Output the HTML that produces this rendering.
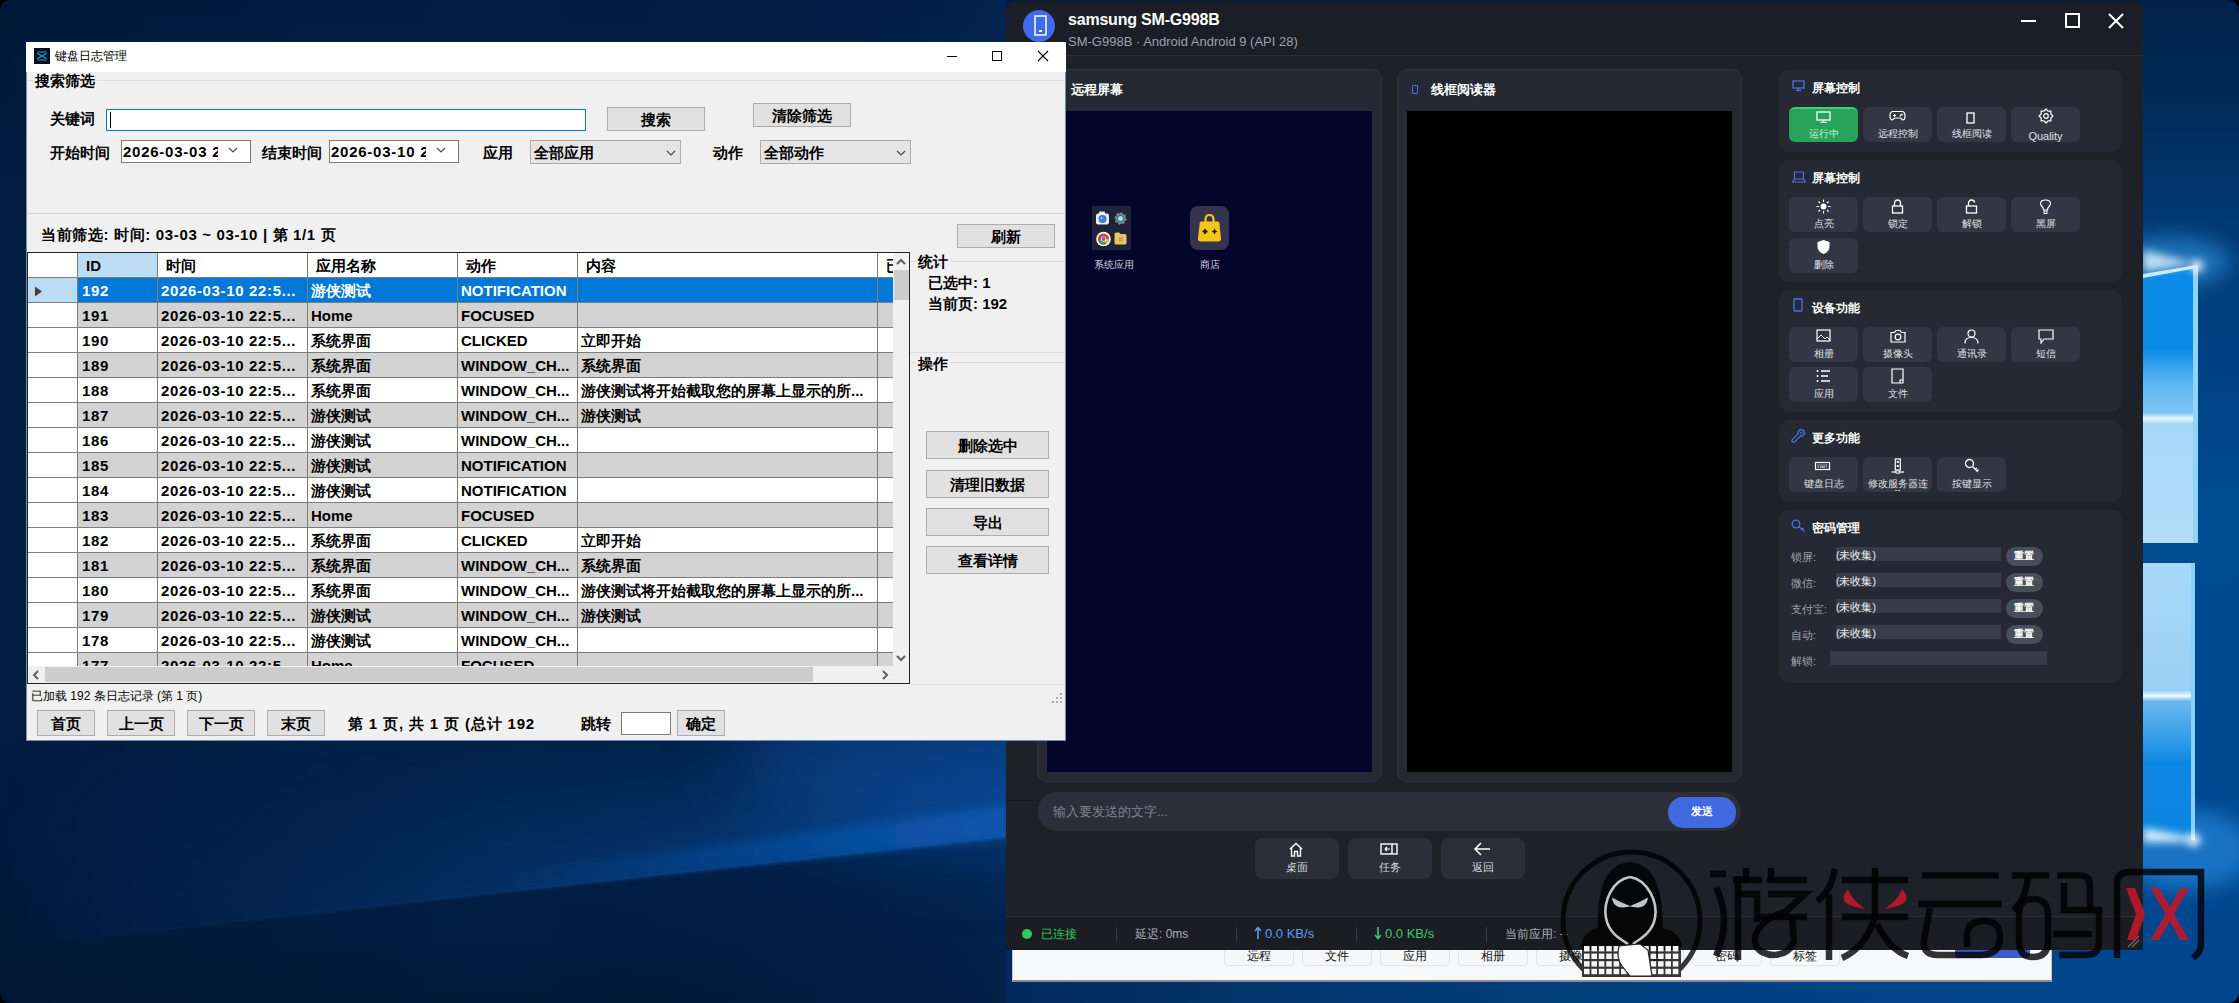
<!DOCTYPE html>
<html><head><meta charset="utf-8">
<style>
*{box-sizing:border-box;margin:0;padding:0}
html,body{width:2239px;height:1003px;overflow:hidden}
body{position:relative;font-family:"Liberation Sans",sans-serif;background:#012552}
.a{position:absolute}
.t{white-space:nowrap;line-height:1}
.wb{font-weight:bold;font-size:15px;color:#000}
.btn{background:#e1e1e1;border:1px solid #adadad;font-weight:bold;font-size:15px;color:#000;display:flex;align-items:center;justify-content:center;line-height:1}
.db{background:#30333f;border-radius:6px;color:#e8e8ec;font-size:10px;text-align:center;line-height:1}
.card{background:#262933;border-radius:10px}
</style></head><body>

<svg class="a" style="left:0;top:0" width="2239" height="1003">
<defs>
<linearGradient id="g_base" gradientUnits="userSpaceOnUse" x1="0" y1="0" x2="0" y2="1003"><stop offset="0" stop-color="#011d42"/><stop offset="0.4" stop-color="#02254e"/><stop offset="0.85" stop-color="#011f46"/><stop offset="1" stop-color="#011b3c"/></linearGradient><linearGradient id="g_hx" gradientUnits="userSpaceOnUse" x1="0" y1="0" x2="1006" y2="0"><stop offset="0" stop-color="#000" stop-opacity="0.12"/><stop offset="0.5" stop-color="#000" stop-opacity="0"/><stop offset="1" stop-color="#0a4080" stop-opacity="0.18"/></linearGradient>
<linearGradient id="g_beam" gradientUnits="userSpaceOnUse" x1="0" y1="0" x2="1006" y2="0"><stop offset="0" stop-color="#0a3c7c" stop-opacity="0"/><stop offset="0.35" stop-color="#0a3c7c" stop-opacity="0.35"/><stop offset="0.75" stop-color="#0a4a98" stop-opacity="0.75"/><stop offset="1" stop-color="#0b56ae" stop-opacity="1"/></linearGradient>
<linearGradient id="g_up" gradientUnits="userSpaceOnUse" x1="0" y1="900" x2="0" y2="720"><stop offset="0" stop-color="#fff" stop-opacity="1"/><stop offset="1" stop-color="#fff" stop-opacity="0"/></linearGradient>
<mask id="m_up"><rect x="0" y="0" width="2239" height="1003" fill="url(#g_up)"/></mask>
<filter id="f_b30" x="-50%" y="-50%" width="200%" height="200%"><feGaussianBlur stdDeviation="40"/></filter>
<filter id="f_b2" x="-10%" y="-10%" width="120%" height="120%"><feGaussianBlur stdDeviation="1.5"/></filter><filter id="f_b6" x="-100%" y="-100%" width="300%" height="300%"><feGaussianBlur stdDeviation="4"/></filter>
<filter id="f_b12" x="-100%" y="-100%" width="300%" height="300%"><feGaussianBlur stdDeviation="10"/></filter>
<linearGradient id="g_right" x1="0" y1="0" x2="0" y2="1"><stop offset="0" stop-color="#01224a"/><stop offset="0.1" stop-color="#012a58"/><stop offset="0.22" stop-color="#013a74"/><stop offset="0.5" stop-color="#004b92"/><stop offset="1" stop-color="#00468e"/></linearGradient>
<linearGradient id="g_up1" x1="0" y1="0" x2="0" y2="1"><stop offset="0" stop-color="#0a8ae8"/><stop offset="0.3" stop-color="#0a8ce8"/><stop offset="0.42" stop-color="#5cb6f0"/><stop offset="0.53" stop-color="#7cc6f4"/><stop offset="0.55" stop-color="#e8f6ff"/><stop offset="0.57" stop-color="#a6d8f8"/><stop offset="1" stop-color="#b2ddf8"/></linearGradient>
<linearGradient id="g_lo1" x1="0" y1="0" x2="0" y2="1"><stop offset="0" stop-color="#a8d8f8"/><stop offset="0.46" stop-color="#9ad0f4"/><stop offset="0.48" stop-color="#f0faff"/><stop offset="0.5" stop-color="#6ab8ee"/><stop offset="0.66" stop-color="#2a98e8"/><stop offset="0.72" stop-color="#0c88e2"/><stop offset="1" stop-color="#0a84e0"/></linearGradient>
</defs>
<rect width="2239" height="1003" fill="url(#g_base)"/><rect width="1006" height="1003" fill="url(#g_hx)"/><path d="M0 0 H12 Q0 0 0 12 Z" fill="#000"/><path d="M0 1003 H12 Q0 1003 0 991 Z" fill="#000"/>
<ellipse cx="1000" cy="760" rx="260" ry="90" fill="#0a4c9c" opacity="0.55" filter="url(#f_b30)"/>
<polygon points="0,948 1006,837 1006,500 0,600" fill="url(#g_beam)" mask="url(#m_up)"/><polygon points="0,950 1006,839 1006,835 0,946" fill="url(#g_beam)" opacity="0.35"/>
<linearGradient id="g_streak" gradientUnits="userSpaceOnUse" x1="500" y1="0" x2="1006" y2="0"><stop offset="0" stop-color="#0c5cb8" stop-opacity="0"/><stop offset="1" stop-color="#0c5cb8" stop-opacity="0.7"/></linearGradient>
<polygon points="500,892 1006,837 1006,805 500,875" fill="url(#g_streak)" filter="url(#f_b6)"/>
<linearGradient id="g_bot" x1="0" y1="0" x2="1" y2="0"><stop offset="0" stop-color="#022a5c"/><stop offset="0.5" stop-color="#02407e"/><stop offset="1" stop-color="#00468e"/></linearGradient><rect x="1006" y="950" width="1137" height="53" fill="url(#g_bot)"/>
<rect x="2143" y="0" width="96" height="1003" fill="url(#g_right)"/>
<ellipse cx="2170" cy="262" rx="60" ry="25" fill="#3aa0f0" opacity="0.55" filter="url(#f_b12)"/>
<ellipse cx="2185" cy="850" rx="70" ry="40" fill="#2a90e8" opacity="0.6" filter="url(#f_b12)"/>
<polygon points="2143,276 2197,266 2197,543 2143,543" fill="url(#g_up1)"/>
<polygon points="2143,250 2197,264 2143,272" fill="#d8f0ff" opacity="0.85" filter="url(#f_b6)"/>
<polygon points="2143,274 2197,265 2197,268 2143,278" fill="#c8ecff"/>
<rect x="2193" y="266" width="5" height="277" fill="#90d4fa"/>
<polygon points="2143,563 2195,563 2195,840 2143,832" fill="url(#g_lo1)"/>
<rect x="2191" y="563" width="4" height="277" fill="#8ad0fa"/>
<polygon points="2143,828 2195,838 2195,842 2143,842" fill="#e0f4ff" filter="url(#f_b6)"/>
<circle cx="2197" cy="266" r="6" fill="#fff" filter="url(#f_b6)"/>
<circle cx="2194" cy="840" r="6" fill="#fff" filter="url(#f_b6)"/><path d="M2239 0 H2227 Q2239 0 2239 12 Z" fill="#000"/><path d="M2239 1003 H2227 Q2239 1003 2239 991 Z" fill="#000"/>
</svg>
<div class="a" style="left:1012px;top:900px;width:1040px;height:82px;background:#f7f8fa;border:1px solid #c8c8c8;border-top:0;border-bottom:2px solid #8a8c90"></div>
<div class="a" style="left:1224px;top:930px;width:70px;height:36px;background:#f6f7f9;border:1px solid #e2e4e8;border-radius:4px"></div>
<div class="a t" style="left:1224px;top:950px;width:70px;text-align:center;font-size:12px;color:#111">远程</div>
<div class="a" style="left:1302px;top:930px;width:70px;height:36px;background:#f6f7f9;border:1px solid #e2e4e8;border-radius:4px"></div>
<div class="a t" style="left:1302px;top:950px;width:70px;text-align:center;font-size:12px;color:#111">文件</div>
<div class="a" style="left:1380px;top:930px;width:70px;height:36px;background:#f6f7f9;border:1px solid #e2e4e8;border-radius:4px"></div>
<div class="a t" style="left:1380px;top:950px;width:70px;text-align:center;font-size:12px;color:#111">应用</div>
<div class="a" style="left:1458px;top:930px;width:70px;height:36px;background:#f6f7f9;border:1px solid #e2e4e8;border-radius:4px"></div>
<div class="a t" style="left:1458px;top:950px;width:70px;text-align:center;font-size:12px;color:#111">相册</div>
<div class="a" style="left:1536px;top:930px;width:70px;height:36px;background:#f6f7f9;border:1px solid #e2e4e8;border-radius:4px"></div>
<div class="a t" style="left:1536px;top:950px;width:70px;text-align:center;font-size:12px;color:#111">摄像</div>
<div class="a" style="left:1614px;top:930px;width:70px;height:36px;background:#f6f7f9;border:1px solid #e2e4e8;border-radius:4px"></div>
<div class="a t" style="left:1614px;top:950px;width:70px;text-align:center;font-size:12px;color:#111">通话</div>
<div class="a" style="left:1692px;top:930px;width:70px;height:36px;background:#f6f7f9;border:1px solid #e2e4e8;border-radius:4px"></div>
<div class="a t" style="left:1692px;top:950px;width:70px;text-align:center;font-size:12px;color:#111">密码</div>
<div class="a" style="left:1770px;top:930px;width:70px;height:36px;background:#f6f7f9;border:1px solid #e2e4e8;border-radius:4px"></div>
<div class="a t" style="left:1770px;top:950px;width:70px;text-align:center;font-size:12px;color:#111">标签</div>
<div class="a" style="left:1955px;top:940px;width:75px;height:18px;background:#3a5ccc;border-radius:4px"></div>
<div class="a" style="left:1006px;top:1px;width:1137px;height:949px;background:#1f2129;border-radius:11px 11px 8px 8px"></div>
<div class="a" style="left:1006px;top:1px;width:1137px;height:54px;background:#1b1e26;border-radius:11px 11px 0 0"></div>
<div class="a" style="left:1006px;top:55px;width:1137px;height:1px;background:#2c2e37"></div>
<div class="a" style="left:1023px;top:10px;width:32px;height:32px;background:#3f6be8;border-radius:50%"></div>
<svg class="a" style="left:1034px;top:15px" width="13" height="21"><rect x="1" y="1" width="11" height="19" fill="none" stroke="#fff" stroke-width="1.5"/><rect x="5" y="15" width="3" height="2" fill="#fff"/></svg>
<div class="a t" style="left:1068px;top:12px;font-size:16px;font-weight:bold;color:#fff;letter-spacing:-0.2px">samsung SM-G998B</div>
<div class="a t" style="left:1068px;top:35px;font-size:13px;color:#9ca1b0">SM-G998B · Android Android 9 (API 28)</div>
<div class="a" style="left:2021px;top:20px;width:15px;height:2px;background:#fff"></div>
<div class="a" style="left:2065px;top:13px;width:15px;height:15px;border:2px solid #fff"></div>
<svg class="a" style="left:2108px;top:13px" width="16" height="16"><path d="M1 1 L15 15 M15 1 L1 15" stroke="#fff" stroke-width="2"/></svg>
<div class="a" style="left:1037px;top:69px;width:345px;height:713px;background:#262933;border:1px solid #30333d;border-radius:10px"></div>
<div class="a t" style="left:1071px;top:83px;font-size:13px;font-weight:bold;color:#fff">远程屏幕</div>
<div class="a" style="left:1047px;top:111px;width:325px;height:661px;background:#03052a"></div>
<div class="a" style="left:1092px;top:206px;width:39px;height:44px;background:#1f2238"></div>
<svg class="a" style="left:1095px;top:210px" width="15" height="16"><rect x="1" y="3.5" width="13" height="11" rx="2" fill="#eceef4"/><rect x="4" y="1.5" width="6" height="3" rx="1" fill="#eceef4"/><circle cx="7.5" cy="9" r="4" fill="#5a6a88"/><circle cx="7.5" cy="9" r="3.2" fill="#2a86f0"/><circle cx="6.5" cy="8" r="0.9" fill="#bde0ff"/></svg>
<svg class="a" style="left:1114px;top:211px" width="13" height="15"><polygon points="12.88,8.77 10.66,10.28 10.11,12.90 7.48,12.40 5.23,13.88 3.72,11.66 1.10,11.11 1.60,8.48 0.12,6.23 2.34,4.72 2.89,2.10 5.52,2.60 7.77,1.12 9.28,3.34 11.90,3.89 11.40,6.52" fill="#70889a"/><circle cx="6.5" cy="7.5" r="3.3" fill="#3e5462"/><circle cx="6.5" cy="7.5" r="2.5" fill="#90f0e4"/></svg>
<svg class="a" style="left:1096px;top:231px" width="15" height="16"><circle cx="7.5" cy="8" r="7.3" fill="#fff"/><circle cx="7.5" cy="8" r="5.6" fill="#e2412f"/><path d="M7.5 8 L2.6 10.8 A5.6 5.6 0 0 0 10.3 12.9 Z" fill="#2ea44f"/><path d="M7.5 8 L10.3 12.9 A5.6 5.6 0 0 0 13.1 8 Z" fill="#f6c026"/><circle cx="7.5" cy="8" r="2.6" fill="#fff"/><circle cx="7.5" cy="8" r="2" fill="#2b7de9"/></svg>
<svg class="a" style="left:1113px;top:231px" width="15" height="15"><path d="M1.5 3 Q1.5 1.5 3 1.5 H6 L7.5 3 H12 Q13.5 3 13.5 4.5 V12 Q13.5 13.5 12 13.5 H3 Q1.5 13.5 1.5 12 Z" fill="#e9c466"/><rect x="6" y="6.5" width="1.6" height="1.6" fill="#b89030"/><rect x="8" y="6.5" width="1.6" height="1.6" fill="#b89030"/><rect x="6" y="8.5" width="1.6" height="1.6" fill="#b89030"/><rect x="8" y="8.5" width="1.6" height="1.6" fill="#b89030"/></svg>
<div class="a t" style="left:1094px;top:260px;font-size:10px;color:#d8d8e0">系统应用</div>
<div class="a" style="left:1190px;top:206px;width:39px;height:44px;background:#34354d;border-radius:8px"></div>
<svg class="a" style="left:1196px;top:212px" width="27" height="32"><path d="M9.5 11 V7.5 Q9.5 3 13.5 3 Q17.5 3 17.5 7.5 V11" stroke="#f5c518" stroke-width="2.2" fill="none"/><path d="M5 9.5 H22 Q23 9.5 23.3 11 L25 26.5 Q25.3 29.5 22 29.5 H5 Q1.7 29.5 2 26.5 L3.7 11 Q4 9.5 5 9.5 Z" fill="#f5c518"/><path d="M6.5 19.5 H11.5 M9 17 V22" stroke="#1d1d28" stroke-width="1.9"/><path d="M18.5 16.5 L19.5 18.5 L21.5 19.5 L19.5 20.5 L18.5 22.5 L17.5 20.5 L15.5 19.5 L17.5 18.5 Z" fill="#1d1d28"/></svg>
<div class="a t" style="left:1200px;top:260px;font-size:10px;color:#d8d8e0">商店</div>
<div class="a" style="left:1397px;top:69px;width:345px;height:713px;background:#262933;border:1px solid #30333d;border-radius:10px"></div>
<div class="a" style="left:1412px;top:85px;width:6px;height:9px;border:1.5px solid #4a72e8;border-radius:1px"></div>
<div class="a t" style="left:1431px;top:83px;font-size:13px;font-weight:bold;color:#fff">线框阅读器</div>
<div class="a" style="left:1407px;top:111px;width:325px;height:661px;background:#000"></div>
<div class="a" style="left:1038px;top:792px;width:703px;height:39px;background:#2c2f3a;border-radius:19px"></div>
<div class="a t" style="left:1053px;top:805px;font-size:13px;color:#7c808c">输入要发送的文字...</div>
<div class="a" style="left:1668px;top:797px;width:68px;height:31px;background:#4169e0;border-radius:15px"></div>
<div class="a t" style="left:1691px;top:806px;font-size:11px;font-weight:bold;color:#fff">发送</div>
<div class="a" style="left:1255px;top:838px;width:84px;height:41px;background:#2c2f3a;border-radius:8px"></div>
<svg class="a" style="left:1288px;top:842px" width="16" height="15"><path d="M2 7 L8 1.5 L14 7 M3.5 6 V14 H6.5 V9.5 H9.5 V14 H12.5 V6" stroke="#fff" stroke-width="1.4" fill="none"/></svg>
<div class="a t" style="left:1286px;top:862px;font-size:11px;color:#d8d8dc">桌面</div>
<div class="a" style="left:1348px;top:838px;width:84px;height:41px;background:#2c2f3a;border-radius:8px"></div>
<svg class="a" style="left:1380px;top:843px" width="18" height="12"><rect x="1" y="1" width="16" height="10" fill="none" stroke="#fff" stroke-width="1.4"/><path d="M12 1 V11" stroke="#fff" stroke-width="1.4"/><path d="M5 6 H10 M5 6 L7 4 M5 6 L7 8" stroke="#fff" stroke-width="1.2"/></svg>
<div class="a t" style="left:1379px;top:862px;font-size:11px;color:#d8d8dc">任务</div>
<div class="a" style="left:1441px;top:838px;width:84px;height:41px;background:#2c2f3a;border-radius:8px"></div>
<svg class="a" style="left:1473px;top:841px" width="18" height="16"><path d="M17 8 H2 M8 2 L2 8 L8 14" stroke="#fff" stroke-width="1.5" fill="none"/></svg>
<div class="a t" style="left:1472px;top:862px;font-size:11px;color:#d8d8dc">返回</div>
<div class="a" style="left:1006px;top:917px;width:1137px;height:33px;background:#1c1d23;border-radius:0 0 8px 8px"></div>
<div class="a" style="left:1006px;top:916px;width:1137px;height:1px;background:#2c2e37"></div>
<div class="a" style="left:1006px;top:800px;width:32px;height:1px;background:#17181d"></div>
<div class="a" style="left:1022px;top:929px;width:10px;height:10px;background:#2ecc5a;border-radius:50%"></div>
<div class="a t" style="left:1041px;top:928px;font-size:12px;color:#2ecc5a">已连接</div>
<div class="a" style="left:1116px;top:927px;width:1px;height:14px;background:#3a3c46"></div>
<div class="a" style="left:1236px;top:927px;width:1px;height:14px;background:#3a3c46"></div>
<div class="a" style="left:1356px;top:927px;width:1px;height:14px;background:#3a3c46"></div>
<div class="a" style="left:1486px;top:927px;width:1px;height:14px;background:#3a3c46"></div>
<div class="a t" style="left:1135px;top:928px;font-size:12px;color:#a8acb8">延迟: 0ms</div>
<svg class="a" style="left:1254px;top:926px" width="8" height="14"><path d="M4 13 V2 M1 5 L4 1.5 L7 5" stroke="#5a9cf0" stroke-width="1.6" fill="none"/></svg>
<div class="a t" style="left:1265px;top:927px;font-size:13px;color:#5a9cf0">0.0 KB/s</div>
<svg class="a" style="left:1374px;top:926px" width="8" height="14"><path d="M4 1 V12 M1 9 L4 12.5 L7 9" stroke="#3cc86e" stroke-width="1.6" fill="none"/></svg>
<div class="a t" style="left:1385px;top:927px;font-size:13px;color:#3cc86e">0.0 KB/s</div>
<div class="a t" style="left:1505px;top:928px;font-size:12px;color:#a8acb8">当前应用: --</div>
<svg class="a" style="left:2126px;top:934px" width="14" height="14"><path d="M2 13 L13 2 M6 13 L13 6" stroke="#6a6c74" stroke-width="1.2"/></svg>
<div class="a" style="left:1779px;top:70px;width:343px;height:82px;background:#262933;border-radius:10px"></div>
<svg class="a" style="left:1792px;top:80px" width="13" height="11"><rect x="1" y="1" width="11" height="7" fill="none" stroke="#4a72e8" stroke-width="1.3"/><path d="M6.5 8 V10 M4 10.3 H9" stroke="#4a72e8" stroke-width="1.2"/></svg>
<div class="a t" style="left:1812px;top:82px;font-size:12px;font-weight:bold;color:#fff">屏幕控制</div>
<div class="a" style="left:1789px;top:107px;width:69px;height:35px;background:#343743;border-radius:6px;background:#27a35a;border-top:2px solid #3ed070"></div>
<svg class="a" style="left:1816px;top:111px" width="15" height="12"><rect x="1" y="1" width="13" height="8" fill="none" stroke="#fff" stroke-width="1.3"/><path d="M7.5 9 V11 M4.5 11.3 H10.5" stroke="#fff" stroke-width="1.2"/></svg>
<div class="a t" style="left:1789px;top:129px;width:69px;text-align:center;font-size:10px;color:#e0e0e6;color:#c8f5d5">运行中</div>
<div class="a" style="left:1863px;top:107px;width:69px;height:35px;background:#343743;border-radius:6px;"></div>
<svg class="a" style="left:1889px;top:110px" width="17" height="11"><path d="M4 1.5 H13 Q16 1.5 16 6 Q16 10 13.5 10 L11.5 8 H5.5 L3.5 10 Q1 10 1 6 Q1 1.5 4 1.5 Z" fill="none" stroke="#fff" stroke-width="1.2"/><path d="M4 5.5 H7 M5.5 4 V7" stroke="#fff" stroke-width="1"/><circle cx="11.5" cy="5.5" r="0.9" fill="#fff"/><circle cx="13" cy="4.5" r="0.9" fill="#fff"/></svg>
<div class="a t" style="left:1863px;top:129px;width:69px;text-align:center;font-size:10px;color:#e0e0e6;">远程控制</div>
<div class="a" style="left:1937px;top:107px;width:69px;height:35px;background:#343743;border-radius:6px;"></div>
<svg class="a" style="left:1966px;top:112px" width="10" height="12"><rect x="1" y="1" width="7" height="10" fill="none" stroke="#fff" stroke-width="1.3"/></svg>
<div class="a t" style="left:1937px;top:129px;width:69px;text-align:center;font-size:10px;color:#e0e0e6;">线框阅读</div>
<div class="a" style="left:2011px;top:107px;width:69px;height:35px;background:#343743;border-radius:6px;"></div>
<svg class="a" style="left:2038px;top:108px" width="16" height="16"><polygon points="15.00,8.00 12.80,9.99 12.95,12.95 9.99,12.80 8.00,15.00 6.01,12.80 3.05,12.95 3.20,9.99 1.00,8.00 3.20,6.01 3.05,3.05 6.01,3.20 8.00,1.00 9.99,3.20 12.95,3.05 12.80,6.01" fill="none" stroke="#fff" stroke-width="1.2" stroke-linejoin="round"/><circle cx="8" cy="8" r="2.3" fill="none" stroke="#fff" stroke-width="1.2"/></svg>
<div class="a t" style="left:2011px;top:129px;width:69px;text-align:center;font-size:10px;color:#e0e0e6;top:131px;font-size:11px">Quality</div>
<div class="a" style="left:1779px;top:160px;width:343px;height:122px;background:#262933;border-radius:10px"></div>
<svg class="a" style="left:1792px;top:171px" width="14" height="12"><path d="M2.5 1 H11.5 V8 H2.5 Z M0.5 11 H13.5 L11.5 8 H2.5 Z" fill="none" stroke="#4a72e8" stroke-width="1.2"/></svg>
<div class="a t" style="left:1812px;top:172px;font-size:12px;font-weight:bold;color:#fff">屏幕控制</div>
<div class="a" style="left:1789px;top:197px;width:69px;height:35px;background:#343743;border-radius:6px;"></div>
<svg class="a" style="left:1816px;top:199px" width="15" height="15"><circle cx="7.5" cy="7.5" r="3" fill="#fff"/><path d="M7.5 0.5 V3 M7.5 12 V14.5 M0.5 7.5 H3 M12 7.5 H14.5 M2.5 2.5 L4 4 M11 11 L12.5 12.5 M12.5 2.5 L11 4 M4 11 L2.5 12.5" stroke="#fff" stroke-width="1.1"/></svg>
<div class="a t" style="left:1789px;top:219px;width:69px;text-align:center;font-size:10px;color:#e0e0e6;">点亮</div>
<div class="a" style="left:1863px;top:197px;width:69px;height:35px;background:#343743;border-radius:6px;"></div>
<svg class="a" style="left:1891px;top:199px" width="13" height="15"><path d="M3.5 7 V4.5 Q3.5 1 6.5 1 Q9.5 1 9.5 4.5 V7" fill="none" stroke="#fff" stroke-width="1.3"/><rect x="1.5" y="7" width="10" height="7" fill="none" stroke="#fff" stroke-width="1.3"/></svg>
<div class="a t" style="left:1863px;top:219px;width:69px;text-align:center;font-size:10px;color:#e0e0e6;">锁定</div>
<div class="a" style="left:1937px;top:197px;width:69px;height:35px;background:#343743;border-radius:6px;"></div>
<svg class="a" style="left:1965px;top:199px" width="13" height="15"><path d="M3.5 7 V4.5 Q3.5 1 6.5 1 Q9.5 1 9.5 3.5" fill="none" stroke="#fff" stroke-width="1.3"/><rect x="1.5" y="7" width="10" height="7" fill="none" stroke="#fff" stroke-width="1.3"/></svg>
<div class="a t" style="left:1937px;top:219px;width:69px;text-align:center;font-size:10px;color:#e0e0e6;">解锁</div>
<div class="a" style="left:2011px;top:197px;width:69px;height:35px;background:#343743;border-radius:6px;"></div>
<svg class="a" style="left:2039px;top:199px" width="13" height="16"><path d="M4.5 11 Q4.5 9 3 7.5 Q1.5 6 1.5 4.8 Q1.5 1 6.5 1 Q11.5 1 11.5 4.8 Q11.5 6 10 7.5 Q8.5 9 8.5 11 Z" fill="none" stroke="#fff" stroke-width="1.2"/><rect x="5" y="12" width="3" height="2.5" fill="none" stroke="#fff" stroke-width="1"/></svg>
<div class="a t" style="left:2011px;top:219px;width:69px;text-align:center;font-size:10px;color:#e0e0e6;">黑屏</div>
<div class="a" style="left:1789px;top:238px;width:69px;height:35px;background:#343743;border-radius:6px;"></div>
<svg class="a" style="left:1816px;top:239px" width="15" height="16"><path d="M7.5 1 L13.5 3 V8 Q13.5 12.5 7.5 15 Q1.5 12.5 1.5 8 V3 Z" fill="#fff"/></svg>
<div class="a t" style="left:1789px;top:260px;width:69px;text-align:center;font-size:10px;color:#e0e0e6;">删除</div>
<div class="a" style="left:1779px;top:290px;width:343px;height:122px;background:#262933;border-radius:10px"></div>
<svg class="a" style="left:1793px;top:298px" width="10" height="14"><rect x="1" y="1" width="8" height="12" rx="1" fill="none" stroke="#4a72e8" stroke-width="1.3"/></svg>
<div class="a t" style="left:1812px;top:302px;font-size:12px;font-weight:bold;color:#fff">设备功能</div>
<div class="a" style="left:1789px;top:327px;width:69px;height:35px;background:#343743;border-radius:6px;"></div>
<svg class="a" style="left:1816px;top:329px" width="15" height="13"><rect x="1" y="1" width="13" height="11" fill="none" stroke="#fff" stroke-width="1.2"/><path d="M1 10 L5 6 L9 10 L11 8 L14 11" fill="none" stroke="#fff" stroke-width="1"/></svg>
<div class="a t" style="left:1789px;top:349px;width:69px;text-align:center;font-size:10px;color:#e0e0e6;">相册</div>
<div class="a" style="left:1863px;top:327px;width:69px;height:35px;background:#343743;border-radius:6px;"></div>
<svg class="a" style="left:1890px;top:329px" width="16" height="14"><path d="M1 3.5 H4.5 L6 1.5 H10 L11.5 3.5 H15 V13 H1 Z" fill="none" stroke="#fff" stroke-width="1.2"/><circle cx="8" cy="8" r="2.8" fill="none" stroke="#fff" stroke-width="1.2"/></svg>
<div class="a t" style="left:1863px;top:349px;width:69px;text-align:center;font-size:10px;color:#e0e0e6;">摄像头</div>
<div class="a" style="left:1937px;top:327px;width:69px;height:35px;background:#343743;border-radius:6px;"></div>
<svg class="a" style="left:1964px;top:329px" width="15" height="15"><circle cx="7.5" cy="4.5" r="3.5" fill="none" stroke="#fff" stroke-width="1.2"/><path d="M1 14.5 Q1 8.5 7.5 8.5 Q14 8.5 14 14.5" fill="none" stroke="#fff" stroke-width="1.2"/></svg>
<div class="a t" style="left:1937px;top:349px;width:69px;text-align:center;font-size:10px;color:#e0e0e6;">通讯录</div>
<div class="a" style="left:2011px;top:327px;width:69px;height:35px;background:#343743;border-radius:6px;"></div>
<svg class="a" style="left:2038px;top:329px" width="16" height="15"><path d="M1 1 H15 V10 H6 L3 14 V10 H1 Z" fill="none" stroke="#fff" stroke-width="1.2"/></svg>
<div class="a t" style="left:2011px;top:349px;width:69px;text-align:center;font-size:10px;color:#e0e0e6;">短信</div>
<div class="a" style="left:1789px;top:367px;width:69px;height:35px;background:#343743;border-radius:6px;"></div>
<svg class="a" style="left:1816px;top:369px" width="15" height="15"><path d="M1.5 1 V3 M1.5 6 V8 M1.5 11 V13 M5 2 H14 M5 7 H12 M5 12 H14" stroke="#fff" stroke-width="1.5"/></svg>
<div class="a t" style="left:1789px;top:389px;width:69px;text-align:center;font-size:10px;color:#e0e0e6;">应用</div>
<div class="a" style="left:1863px;top:367px;width:69px;height:35px;background:#343743;border-radius:6px;"></div>
<svg class="a" style="left:1891px;top:368px" width="13" height="16"><path d="M1 1 H12 V15 H1 Z M9 15 V12 H12" fill="none" stroke="#fff" stroke-width="1.2"/></svg>
<div class="a t" style="left:1863px;top:389px;width:69px;text-align:center;font-size:10px;color:#e0e0e6;">文件</div>
<div class="a" style="left:1779px;top:420px;width:343px;height:82px;background:#262933;border-radius:10px"></div>
<svg class="a" style="left:1791px;top:428px" width="15" height="15"><path d="M9.2 1.3 L12.7 2.3 L13.7 5.8 L11.2 8.3 L9.6 7.9 L3.6 13.9 Q2.4 14.8 1.4 13.8 Q0.4 12.8 1.3 11.6 L7.3 5.6 L6.9 4 Z" fill="none" stroke="#4a72e8" stroke-width="1.3" stroke-linejoin="round"/><circle cx="10.3" cy="4.9" r="0.9" fill="none" stroke="#4a72e8" stroke-width="0.9"/></svg>
<div class="a t" style="left:1812px;top:432px;font-size:12px;font-weight:bold;color:#fff">更多功能</div>
<div class="a" style="left:1789px;top:457px;width:69px;height:35px;background:#343743;border-radius:6px;"></div>
<svg class="a" style="left:1814px;top:461px" width="17" height="10"><rect x="1.5" y="1.5" width="14" height="7" fill="none" stroke="#fff" stroke-width="1.2"/><path d="M3.5 4 H4.5 M5.5 4 H6.5 M7.5 4 H8.5 M9.5 4 H10.5 M11.5 4 H13 M3.5 6 H5 M6 6 H11 M12 6 H13" stroke="#fff" stroke-width="1.1"/></svg>
<div class="a t" style="left:1789px;top:479px;width:69px;text-align:center;font-size:10px;color:#e0e0e6;">键盘日志</div>
<div class="a" style="left:1863px;top:457px;width:69px;height:35px;background:#343743;border-radius:6px;"></div>
<svg class="a" style="left:1890px;top:458px" width="15" height="16"><rect x="5.3" y="1" width="5" height="11" fill="none" stroke="#fff" stroke-width="1.2"/><rect x="6.8" y="3" width="2" height="2" fill="#fff"/><rect x="6.8" y="7" width="2" height="2" fill="#fff"/><path d="M1.5 14 H14" stroke="#fff" stroke-width="1.2"/><ellipse cx="7.8" cy="14" rx="2.2" ry="1.3" fill="#343743" stroke="#fff" stroke-width="1.1"/></svg>
<div class="a t" style="left:1863px;top:479px;width:69px;text-align:center;font-size:10px;color:#e0e0e6;">修改服务器连</div>
<div class="a" style="left:1895px;top:490px;width:2px;height:1px;background:#ccc"></div>
<div class="a" style="left:1898px;top:490px;width:2px;height:1px;background:#ccc"></div>
<div class="a" style="left:1937px;top:457px;width:69px;height:35px;background:#343743;border-radius:6px;"></div>
<svg class="a" style="left:1964px;top:458px" width="16" height="16"><circle cx="5.5" cy="5.5" r="4" fill="none" stroke="#fff" stroke-width="1.3"/><path d="M8.5 8.5 L14 14 M11.5 11.5 L13 10 M13 13 L14.5 11.5" stroke="#fff" stroke-width="1.3"/></svg>
<div class="a t" style="left:1937px;top:479px;width:69px;text-align:center;font-size:10px;color:#e0e0e6;">按键显示</div>
<div class="a" style="left:1779px;top:510px;width:343px;height:173px;background:#262933;border-radius:10px"></div>
<svg class="a" style="left:1791px;top:519px" width="15" height="14"><circle cx="5" cy="5" r="3.8" fill="none" stroke="#4a72e8" stroke-width="1.3"/><path d="M7.5 7.5 L13.5 12.5 M11 10.5 L12.5 9" stroke="#4a72e8" stroke-width="1.3"/></svg>
<div class="a t" style="left:1812px;top:522px;font-size:12px;font-weight:bold;color:#fff">密码管理</div>
<div class="a t" style="left:1791px;top:552px;font-size:11px;color:#a0a4b0">锁屏:</div>
<div class="a" style="left:1836px;top:547px;width:165px;height:14px;background:#393c48"></div>
<div class="a t" style="left:1836px;top:550px;font-size:10.5px;color:#f0f0f0">(未收集)</div>
<div class="a" style="left:2006px;top:547px;width:37px;height:19px;background:#4a4d5a;border-radius:10px"></div>
<div class="a t" style="left:2014px;top:551px;font-size:10px;font-weight:bold;color:#fff">重置</div>
<div class="a t" style="left:1791px;top:578px;font-size:11px;color:#a0a4b0">微信:</div>
<div class="a" style="left:1836px;top:573px;width:165px;height:14px;background:#393c48"></div>
<div class="a t" style="left:1836px;top:576px;font-size:10.5px;color:#f0f0f0">(未收集)</div>
<div class="a" style="left:2006px;top:573px;width:37px;height:19px;background:#4a4d5a;border-radius:10px"></div>
<div class="a t" style="left:2014px;top:577px;font-size:10px;font-weight:bold;color:#fff">重置</div>
<div class="a t" style="left:1791px;top:604px;font-size:11px;color:#a0a4b0">支付宝:</div>
<div class="a" style="left:1836px;top:599px;width:165px;height:14px;background:#393c48"></div>
<div class="a t" style="left:1836px;top:602px;font-size:10.5px;color:#f0f0f0">(未收集)</div>
<div class="a" style="left:2006px;top:599px;width:37px;height:19px;background:#4a4d5a;border-radius:10px"></div>
<div class="a t" style="left:2014px;top:603px;font-size:10px;font-weight:bold;color:#fff">重置</div>
<div class="a t" style="left:1791px;top:630px;font-size:11px;color:#a0a4b0">自动:</div>
<div class="a" style="left:1836px;top:625px;width:165px;height:14px;background:#393c48"></div>
<div class="a t" style="left:1836px;top:628px;font-size:10.5px;color:#f0f0f0">(未收集)</div>
<div class="a" style="left:2006px;top:625px;width:37px;height:19px;background:#4a4d5a;border-radius:10px"></div>
<div class="a t" style="left:2014px;top:629px;font-size:10px;font-weight:bold;color:#fff">重置</div>
<div class="a t" style="left:1791px;top:656px;font-size:11px;color:#a0a4b0">解锁:</div>
<div class="a" style="left:1830px;top:651px;width:217px;height:14px;background:#393c48"></div>
<div class="a" style="left:26px;top:42px;width:1040px;height:699px;background:#f0f0f0;border:1px solid #6f8fb0;border-top:0"></div>
<div class="a" style="left:26px;top:42px;width:1040px;height:30px;background:#fff"></div>
<div class="a" style="left:34px;top:48px;width:16px;height:16px;background:#04101e"></div>
<svg class="a" style="left:34px;top:48px" width="16" height="16"><path d="M3 5 L13 11 M3 11 L13 5 M4 4 H12 M4 12 H12" stroke="#1e9bf0" stroke-width="1.2" fill="none"/></svg>
<div class="a t" style="left:55px;top:50px;font-size:12px;color:#000">键盘日志管理</div>
<div class="a" style="left:947px;top:56px;width:10px;height:1px;background:#000"></div>
<div class="a" style="left:992px;top:51px;width:10px;height:10px;border:1px solid #000"></div>
<svg class="a" style="left:1037px;top:50px" width="12" height="12"><path d="M1 1 L11 11 M11 1 L1 11" stroke="#000" stroke-width="1.1"/></svg>
<div class="a" style="left:27px;top:80px;width:1038px;height:1px;background:#dcdcdc"></div>
<div class="a" style="left:33px;top:73px;width:64px;height:16px;background:#f0f0f0"></div>
<div class="a t" style="left:35px;top:73px;font-size:15px;font-weight:bold">搜索筛选</div>
<div class="a t" style="left:50px;top:111px;font-size:15px;font-weight:bold">关键词</div>
<div class="a" style="left:106px;top:109px;width:480px;height:22px;background:#fff;border:1px solid #0078d7"></div>
<div class="a" style="left:110px;top:112px;width:1px;height:16px;background:#000"></div>
<div class="a btn" style="left:607px;top:107px;width:98px;height:24px">搜索</div>
<div class="a btn" style="left:753px;top:103px;width:98px;height:24px">清除筛选</div>
<div class="a t" style="left:50px;top:145px;font-size:15px;font-weight:bold">开始时间</div>
<div class="a" style="left:121px;top:140px;width:130px;height:23px;background:#fff;border:1px solid #7a7a7a"></div>
<div class="a" style="left:123px;top:141px;width:95px;height:20px;overflow:hidden"><div class="a t" style="left:0;top:3px;font-size:15px;font-weight:bold;letter-spacing:0.75px">2026-03-03 22:00</div></div>
<svg class="a" style="left:228px;top:147px" width="10" height="7"><path d="M1 1 L5 5 L9 1" stroke="#444" stroke-width="1.1" fill="none"/></svg>
<div class="a t" style="left:262px;top:145px;font-size:15px;font-weight:bold">结束时间</div>
<div class="a" style="left:329px;top:140px;width:130px;height:23px;background:#fff;border:1px solid #7a7a7a"></div>
<div class="a" style="left:331px;top:141px;width:95px;height:20px;overflow:hidden"><div class="a t" style="left:0;top:3px;font-size:15px;font-weight:bold;letter-spacing:0.75px">2026-03-10 22:00</div></div>
<svg class="a" style="left:436px;top:147px" width="10" height="7"><path d="M1 1 L5 5 L9 1" stroke="#444" stroke-width="1.1" fill="none"/></svg>
<div class="a t" style="left:483px;top:145px;font-size:15px;font-weight:bold">应用</div>
<div class="a" style="left:530px;top:140px;width:151px;height:24px;background:#e5e5e5;border:1px solid #adadad"></div>
<div class="a t" style="left:534px;top:145px;font-size:15px;font-weight:bold">全部应用</div>
<svg class="a" style="left:666px;top:150px" width="10" height="7"><path d="M1 1 L5 5 L9 1" stroke="#444" stroke-width="1.1" fill="none"/></svg>
<div class="a t" style="left:713px;top:145px;font-size:15px;font-weight:bold">动作</div>
<div class="a" style="left:760px;top:140px;width:151px;height:24px;background:#e5e5e5;border:1px solid #adadad"></div>
<div class="a t" style="left:764px;top:145px;font-size:15px;font-weight:bold">全部动作</div>
<svg class="a" style="left:896px;top:150px" width="10" height="7"><path d="M1 1 L5 5 L9 1" stroke="#444" stroke-width="1.1" fill="none"/></svg>
<div class="a" style="left:27px;top:213px;width:1038px;height:1px;background:#d5d5d5"></div>
<div class="a t" style="left:41px;top:227px;font-size:15px;font-weight:bold;letter-spacing:0.65px">当前筛选: 时间: 03-03 ~ 03-10 | 第 1/1 页</div>
<div class="a btn" style="left:957px;top:224px;width:98px;height:24px">刷新</div>
<div class="a" style="left:27px;top:252px;width:883px;height:432px;border:1px solid #222;background:#f0f0f0;overflow:hidden">
<div class="a" style="left:0;top:0;width:865px;height:25px;background:#fff"></div>
<div class="a" style="left:50px;top:0;width:80px;height:25px;background:#bcdcf4"></div>
<div class="a" style="left:49px;top:0;width:1px;height:415px;background:#7c7c7c"></div>
<div class="a t" style="left:58px;top:5px;font-size:15px;font-weight:bold">ID</div>
<div class="a" style="left:129px;top:0;width:1px;height:415px;background:#7c7c7c"></div>
<div class="a t" style="left:138px;top:5px;font-size:15px;font-weight:bold">时间</div>
<div class="a" style="left:279px;top:0;width:1px;height:415px;background:#7c7c7c"></div>
<div class="a t" style="left:288px;top:5px;font-size:15px;font-weight:bold">应用名称</div>
<div class="a" style="left:429px;top:0;width:1px;height:415px;background:#7c7c7c"></div>
<div class="a t" style="left:438px;top:5px;font-size:15px;font-weight:bold">动作</div>
<div class="a" style="left:549px;top:0;width:1px;height:415px;background:#7c7c7c"></div>
<div class="a t" style="left:558px;top:5px;font-size:15px;font-weight:bold">内容</div>
<div class="a" style="left:849px;top:0;width:1px;height:415px;background:#7c7c7c"></div>
<div class="a t" style="left:858px;top:5px;font-size:15px;font-weight:bold">已</div>
<div class="a" style="left:50px;top:25px;width:815px;height:24px;background:#0078d7"></div>
<div class="a" style="left:0;top:25px;width:49px;height:24px;background:#bcdcf4"></div>
<div class="a" style="left:0;top:49px;width:865px;height:1px;background:#7c7c7c"></div>
<div class="a" style="left:49px;top:25px;width:1px;height:25px;background:#7c7c7c"></div>
<div class="a" style="left:129px;top:25px;width:1px;height:25px;background:#7c7c7c"></div>
<div class="a" style="left:279px;top:25px;width:1px;height:25px;background:#7c7c7c"></div>
<div class="a" style="left:429px;top:25px;width:1px;height:25px;background:#7c7c7c"></div>
<div class="a" style="left:549px;top:25px;width:1px;height:25px;background:#7c7c7c"></div>
<div class="a" style="left:849px;top:25px;width:1px;height:25px;background:#7c7c7c"></div>
<div class="a t" style="left:54px;top:30px;font-size:15px;font-weight:bold;color:#fff;letter-spacing:0.6px">192</div>
<div class="a t" style="left:133px;top:30px;font-size:15px;font-weight:bold;color:#fff;letter-spacing:0.65px">2026-03-10 22:5...</div>
<div class="a t" style="left:283px;top:30px;font-size:15px;font-weight:bold;color:#fff">游侠测试</div>
<div class="a t" style="left:433px;top:30px;font-size:15px;font-weight:bold;color:#fff">NOTIFICATION</div>
<div class="a" style="left:50px;top:50px;width:815px;height:24px;background:#d3d3d3"></div>
<div class="a" style="left:0;top:50px;width:49px;height:24px;background:#fff"></div>
<div class="a" style="left:0;top:74px;width:865px;height:1px;background:#7c7c7c"></div>
<div class="a" style="left:49px;top:50px;width:1px;height:25px;background:#7c7c7c"></div>
<div class="a" style="left:129px;top:50px;width:1px;height:25px;background:#7c7c7c"></div>
<div class="a" style="left:279px;top:50px;width:1px;height:25px;background:#7c7c7c"></div>
<div class="a" style="left:429px;top:50px;width:1px;height:25px;background:#7c7c7c"></div>
<div class="a" style="left:549px;top:50px;width:1px;height:25px;background:#7c7c7c"></div>
<div class="a" style="left:849px;top:50px;width:1px;height:25px;background:#7c7c7c"></div>
<div class="a t" style="left:54px;top:55px;font-size:15px;font-weight:bold;color:#000;letter-spacing:0.6px">191</div>
<div class="a t" style="left:133px;top:55px;font-size:15px;font-weight:bold;color:#000;letter-spacing:0.65px">2026-03-10 22:5...</div>
<div class="a t" style="left:283px;top:55px;font-size:15px;font-weight:bold;color:#000">Home</div>
<div class="a t" style="left:433px;top:55px;font-size:15px;font-weight:bold;color:#000">FOCUSED</div>
<div class="a" style="left:50px;top:75px;width:815px;height:24px;background:#fff"></div>
<div class="a" style="left:0;top:75px;width:49px;height:24px;background:#fff"></div>
<div class="a" style="left:0;top:99px;width:865px;height:1px;background:#7c7c7c"></div>
<div class="a" style="left:49px;top:75px;width:1px;height:25px;background:#7c7c7c"></div>
<div class="a" style="left:129px;top:75px;width:1px;height:25px;background:#7c7c7c"></div>
<div class="a" style="left:279px;top:75px;width:1px;height:25px;background:#7c7c7c"></div>
<div class="a" style="left:429px;top:75px;width:1px;height:25px;background:#7c7c7c"></div>
<div class="a" style="left:549px;top:75px;width:1px;height:25px;background:#7c7c7c"></div>
<div class="a" style="left:849px;top:75px;width:1px;height:25px;background:#7c7c7c"></div>
<div class="a t" style="left:54px;top:80px;font-size:15px;font-weight:bold;color:#000;letter-spacing:0.6px">190</div>
<div class="a t" style="left:133px;top:80px;font-size:15px;font-weight:bold;color:#000;letter-spacing:0.65px">2026-03-10 22:5...</div>
<div class="a t" style="left:283px;top:80px;font-size:15px;font-weight:bold;color:#000">系统界面</div>
<div class="a t" style="left:433px;top:80px;font-size:15px;font-weight:bold;color:#000">CLICKED</div>
<div class="a t" style="left:553px;top:80px;font-size:15px;font-weight:bold;color:#000">立即开始</div>
<div class="a" style="left:50px;top:100px;width:815px;height:24px;background:#d3d3d3"></div>
<div class="a" style="left:0;top:100px;width:49px;height:24px;background:#fff"></div>
<div class="a" style="left:0;top:124px;width:865px;height:1px;background:#7c7c7c"></div>
<div class="a" style="left:49px;top:100px;width:1px;height:25px;background:#7c7c7c"></div>
<div class="a" style="left:129px;top:100px;width:1px;height:25px;background:#7c7c7c"></div>
<div class="a" style="left:279px;top:100px;width:1px;height:25px;background:#7c7c7c"></div>
<div class="a" style="left:429px;top:100px;width:1px;height:25px;background:#7c7c7c"></div>
<div class="a" style="left:549px;top:100px;width:1px;height:25px;background:#7c7c7c"></div>
<div class="a" style="left:849px;top:100px;width:1px;height:25px;background:#7c7c7c"></div>
<div class="a t" style="left:54px;top:105px;font-size:15px;font-weight:bold;color:#000;letter-spacing:0.6px">189</div>
<div class="a t" style="left:133px;top:105px;font-size:15px;font-weight:bold;color:#000;letter-spacing:0.65px">2026-03-10 22:5...</div>
<div class="a t" style="left:283px;top:105px;font-size:15px;font-weight:bold;color:#000">系统界面</div>
<div class="a t" style="left:433px;top:105px;font-size:15px;font-weight:bold;color:#000">WINDOW_CH...</div>
<div class="a t" style="left:553px;top:105px;font-size:15px;font-weight:bold;color:#000">系统界面</div>
<div class="a" style="left:50px;top:125px;width:815px;height:24px;background:#fff"></div>
<div class="a" style="left:0;top:125px;width:49px;height:24px;background:#fff"></div>
<div class="a" style="left:0;top:149px;width:865px;height:1px;background:#7c7c7c"></div>
<div class="a" style="left:49px;top:125px;width:1px;height:25px;background:#7c7c7c"></div>
<div class="a" style="left:129px;top:125px;width:1px;height:25px;background:#7c7c7c"></div>
<div class="a" style="left:279px;top:125px;width:1px;height:25px;background:#7c7c7c"></div>
<div class="a" style="left:429px;top:125px;width:1px;height:25px;background:#7c7c7c"></div>
<div class="a" style="left:549px;top:125px;width:1px;height:25px;background:#7c7c7c"></div>
<div class="a" style="left:849px;top:125px;width:1px;height:25px;background:#7c7c7c"></div>
<div class="a t" style="left:54px;top:130px;font-size:15px;font-weight:bold;color:#000;letter-spacing:0.6px">188</div>
<div class="a t" style="left:133px;top:130px;font-size:15px;font-weight:bold;color:#000;letter-spacing:0.65px">2026-03-10 22:5...</div>
<div class="a t" style="left:283px;top:130px;font-size:15px;font-weight:bold;color:#000">系统界面</div>
<div class="a t" style="left:433px;top:130px;font-size:15px;font-weight:bold;color:#000">WINDOW_CH...</div>
<div class="a t" style="left:553px;top:130px;font-size:15px;font-weight:bold;color:#000">游侠测试将开始截取您的屏幕上显示的所...</div>
<div class="a" style="left:50px;top:150px;width:815px;height:24px;background:#d3d3d3"></div>
<div class="a" style="left:0;top:150px;width:49px;height:24px;background:#fff"></div>
<div class="a" style="left:0;top:174px;width:865px;height:1px;background:#7c7c7c"></div>
<div class="a" style="left:49px;top:150px;width:1px;height:25px;background:#7c7c7c"></div>
<div class="a" style="left:129px;top:150px;width:1px;height:25px;background:#7c7c7c"></div>
<div class="a" style="left:279px;top:150px;width:1px;height:25px;background:#7c7c7c"></div>
<div class="a" style="left:429px;top:150px;width:1px;height:25px;background:#7c7c7c"></div>
<div class="a" style="left:549px;top:150px;width:1px;height:25px;background:#7c7c7c"></div>
<div class="a" style="left:849px;top:150px;width:1px;height:25px;background:#7c7c7c"></div>
<div class="a t" style="left:54px;top:155px;font-size:15px;font-weight:bold;color:#000;letter-spacing:0.6px">187</div>
<div class="a t" style="left:133px;top:155px;font-size:15px;font-weight:bold;color:#000;letter-spacing:0.65px">2026-03-10 22:5...</div>
<div class="a t" style="left:283px;top:155px;font-size:15px;font-weight:bold;color:#000">游侠测试</div>
<div class="a t" style="left:433px;top:155px;font-size:15px;font-weight:bold;color:#000">WINDOW_CH...</div>
<div class="a t" style="left:553px;top:155px;font-size:15px;font-weight:bold;color:#000">游侠测试</div>
<div class="a" style="left:50px;top:175px;width:815px;height:24px;background:#fff"></div>
<div class="a" style="left:0;top:175px;width:49px;height:24px;background:#fff"></div>
<div class="a" style="left:0;top:199px;width:865px;height:1px;background:#7c7c7c"></div>
<div class="a" style="left:49px;top:175px;width:1px;height:25px;background:#7c7c7c"></div>
<div class="a" style="left:129px;top:175px;width:1px;height:25px;background:#7c7c7c"></div>
<div class="a" style="left:279px;top:175px;width:1px;height:25px;background:#7c7c7c"></div>
<div class="a" style="left:429px;top:175px;width:1px;height:25px;background:#7c7c7c"></div>
<div class="a" style="left:549px;top:175px;width:1px;height:25px;background:#7c7c7c"></div>
<div class="a" style="left:849px;top:175px;width:1px;height:25px;background:#7c7c7c"></div>
<div class="a t" style="left:54px;top:180px;font-size:15px;font-weight:bold;color:#000;letter-spacing:0.6px">186</div>
<div class="a t" style="left:133px;top:180px;font-size:15px;font-weight:bold;color:#000;letter-spacing:0.65px">2026-03-10 22:5...</div>
<div class="a t" style="left:283px;top:180px;font-size:15px;font-weight:bold;color:#000">游侠测试</div>
<div class="a t" style="left:433px;top:180px;font-size:15px;font-weight:bold;color:#000">WINDOW_CH...</div>
<div class="a" style="left:50px;top:200px;width:815px;height:24px;background:#d3d3d3"></div>
<div class="a" style="left:0;top:200px;width:49px;height:24px;background:#fff"></div>
<div class="a" style="left:0;top:224px;width:865px;height:1px;background:#7c7c7c"></div>
<div class="a" style="left:49px;top:200px;width:1px;height:25px;background:#7c7c7c"></div>
<div class="a" style="left:129px;top:200px;width:1px;height:25px;background:#7c7c7c"></div>
<div class="a" style="left:279px;top:200px;width:1px;height:25px;background:#7c7c7c"></div>
<div class="a" style="left:429px;top:200px;width:1px;height:25px;background:#7c7c7c"></div>
<div class="a" style="left:549px;top:200px;width:1px;height:25px;background:#7c7c7c"></div>
<div class="a" style="left:849px;top:200px;width:1px;height:25px;background:#7c7c7c"></div>
<div class="a t" style="left:54px;top:205px;font-size:15px;font-weight:bold;color:#000;letter-spacing:0.6px">185</div>
<div class="a t" style="left:133px;top:205px;font-size:15px;font-weight:bold;color:#000;letter-spacing:0.65px">2026-03-10 22:5...</div>
<div class="a t" style="left:283px;top:205px;font-size:15px;font-weight:bold;color:#000">游侠测试</div>
<div class="a t" style="left:433px;top:205px;font-size:15px;font-weight:bold;color:#000">NOTIFICATION</div>
<div class="a" style="left:50px;top:225px;width:815px;height:24px;background:#fff"></div>
<div class="a" style="left:0;top:225px;width:49px;height:24px;background:#fff"></div>
<div class="a" style="left:0;top:249px;width:865px;height:1px;background:#7c7c7c"></div>
<div class="a" style="left:49px;top:225px;width:1px;height:25px;background:#7c7c7c"></div>
<div class="a" style="left:129px;top:225px;width:1px;height:25px;background:#7c7c7c"></div>
<div class="a" style="left:279px;top:225px;width:1px;height:25px;background:#7c7c7c"></div>
<div class="a" style="left:429px;top:225px;width:1px;height:25px;background:#7c7c7c"></div>
<div class="a" style="left:549px;top:225px;width:1px;height:25px;background:#7c7c7c"></div>
<div class="a" style="left:849px;top:225px;width:1px;height:25px;background:#7c7c7c"></div>
<div class="a t" style="left:54px;top:230px;font-size:15px;font-weight:bold;color:#000;letter-spacing:0.6px">184</div>
<div class="a t" style="left:133px;top:230px;font-size:15px;font-weight:bold;color:#000;letter-spacing:0.65px">2026-03-10 22:5...</div>
<div class="a t" style="left:283px;top:230px;font-size:15px;font-weight:bold;color:#000">游侠测试</div>
<div class="a t" style="left:433px;top:230px;font-size:15px;font-weight:bold;color:#000">NOTIFICATION</div>
<div class="a" style="left:50px;top:250px;width:815px;height:24px;background:#d3d3d3"></div>
<div class="a" style="left:0;top:250px;width:49px;height:24px;background:#fff"></div>
<div class="a" style="left:0;top:274px;width:865px;height:1px;background:#7c7c7c"></div>
<div class="a" style="left:49px;top:250px;width:1px;height:25px;background:#7c7c7c"></div>
<div class="a" style="left:129px;top:250px;width:1px;height:25px;background:#7c7c7c"></div>
<div class="a" style="left:279px;top:250px;width:1px;height:25px;background:#7c7c7c"></div>
<div class="a" style="left:429px;top:250px;width:1px;height:25px;background:#7c7c7c"></div>
<div class="a" style="left:549px;top:250px;width:1px;height:25px;background:#7c7c7c"></div>
<div class="a" style="left:849px;top:250px;width:1px;height:25px;background:#7c7c7c"></div>
<div class="a t" style="left:54px;top:255px;font-size:15px;font-weight:bold;color:#000;letter-spacing:0.6px">183</div>
<div class="a t" style="left:133px;top:255px;font-size:15px;font-weight:bold;color:#000;letter-spacing:0.65px">2026-03-10 22:5...</div>
<div class="a t" style="left:283px;top:255px;font-size:15px;font-weight:bold;color:#000">Home</div>
<div class="a t" style="left:433px;top:255px;font-size:15px;font-weight:bold;color:#000">FOCUSED</div>
<div class="a" style="left:50px;top:275px;width:815px;height:24px;background:#fff"></div>
<div class="a" style="left:0;top:275px;width:49px;height:24px;background:#fff"></div>
<div class="a" style="left:0;top:299px;width:865px;height:1px;background:#7c7c7c"></div>
<div class="a" style="left:49px;top:275px;width:1px;height:25px;background:#7c7c7c"></div>
<div class="a" style="left:129px;top:275px;width:1px;height:25px;background:#7c7c7c"></div>
<div class="a" style="left:279px;top:275px;width:1px;height:25px;background:#7c7c7c"></div>
<div class="a" style="left:429px;top:275px;width:1px;height:25px;background:#7c7c7c"></div>
<div class="a" style="left:549px;top:275px;width:1px;height:25px;background:#7c7c7c"></div>
<div class="a" style="left:849px;top:275px;width:1px;height:25px;background:#7c7c7c"></div>
<div class="a t" style="left:54px;top:280px;font-size:15px;font-weight:bold;color:#000;letter-spacing:0.6px">182</div>
<div class="a t" style="left:133px;top:280px;font-size:15px;font-weight:bold;color:#000;letter-spacing:0.65px">2026-03-10 22:5...</div>
<div class="a t" style="left:283px;top:280px;font-size:15px;font-weight:bold;color:#000">系统界面</div>
<div class="a t" style="left:433px;top:280px;font-size:15px;font-weight:bold;color:#000">CLICKED</div>
<div class="a t" style="left:553px;top:280px;font-size:15px;font-weight:bold;color:#000">立即开始</div>
<div class="a" style="left:50px;top:300px;width:815px;height:24px;background:#d3d3d3"></div>
<div class="a" style="left:0;top:300px;width:49px;height:24px;background:#fff"></div>
<div class="a" style="left:0;top:324px;width:865px;height:1px;background:#7c7c7c"></div>
<div class="a" style="left:49px;top:300px;width:1px;height:25px;background:#7c7c7c"></div>
<div class="a" style="left:129px;top:300px;width:1px;height:25px;background:#7c7c7c"></div>
<div class="a" style="left:279px;top:300px;width:1px;height:25px;background:#7c7c7c"></div>
<div class="a" style="left:429px;top:300px;width:1px;height:25px;background:#7c7c7c"></div>
<div class="a" style="left:549px;top:300px;width:1px;height:25px;background:#7c7c7c"></div>
<div class="a" style="left:849px;top:300px;width:1px;height:25px;background:#7c7c7c"></div>
<div class="a t" style="left:54px;top:305px;font-size:15px;font-weight:bold;color:#000;letter-spacing:0.6px">181</div>
<div class="a t" style="left:133px;top:305px;font-size:15px;font-weight:bold;color:#000;letter-spacing:0.65px">2026-03-10 22:5...</div>
<div class="a t" style="left:283px;top:305px;font-size:15px;font-weight:bold;color:#000">系统界面</div>
<div class="a t" style="left:433px;top:305px;font-size:15px;font-weight:bold;color:#000">WINDOW_CH...</div>
<div class="a t" style="left:553px;top:305px;font-size:15px;font-weight:bold;color:#000">系统界面</div>
<div class="a" style="left:50px;top:325px;width:815px;height:24px;background:#fff"></div>
<div class="a" style="left:0;top:325px;width:49px;height:24px;background:#fff"></div>
<div class="a" style="left:0;top:349px;width:865px;height:1px;background:#7c7c7c"></div>
<div class="a" style="left:49px;top:325px;width:1px;height:25px;background:#7c7c7c"></div>
<div class="a" style="left:129px;top:325px;width:1px;height:25px;background:#7c7c7c"></div>
<div class="a" style="left:279px;top:325px;width:1px;height:25px;background:#7c7c7c"></div>
<div class="a" style="left:429px;top:325px;width:1px;height:25px;background:#7c7c7c"></div>
<div class="a" style="left:549px;top:325px;width:1px;height:25px;background:#7c7c7c"></div>
<div class="a" style="left:849px;top:325px;width:1px;height:25px;background:#7c7c7c"></div>
<div class="a t" style="left:54px;top:330px;font-size:15px;font-weight:bold;color:#000;letter-spacing:0.6px">180</div>
<div class="a t" style="left:133px;top:330px;font-size:15px;font-weight:bold;color:#000;letter-spacing:0.65px">2026-03-10 22:5...</div>
<div class="a t" style="left:283px;top:330px;font-size:15px;font-weight:bold;color:#000">系统界面</div>
<div class="a t" style="left:433px;top:330px;font-size:15px;font-weight:bold;color:#000">WINDOW_CH...</div>
<div class="a t" style="left:553px;top:330px;font-size:15px;font-weight:bold;color:#000">游侠测试将开始截取您的屏幕上显示的所...</div>
<div class="a" style="left:50px;top:350px;width:815px;height:24px;background:#d3d3d3"></div>
<div class="a" style="left:0;top:350px;width:49px;height:24px;background:#fff"></div>
<div class="a" style="left:0;top:374px;width:865px;height:1px;background:#7c7c7c"></div>
<div class="a" style="left:49px;top:350px;width:1px;height:25px;background:#7c7c7c"></div>
<div class="a" style="left:129px;top:350px;width:1px;height:25px;background:#7c7c7c"></div>
<div class="a" style="left:279px;top:350px;width:1px;height:25px;background:#7c7c7c"></div>
<div class="a" style="left:429px;top:350px;width:1px;height:25px;background:#7c7c7c"></div>
<div class="a" style="left:549px;top:350px;width:1px;height:25px;background:#7c7c7c"></div>
<div class="a" style="left:849px;top:350px;width:1px;height:25px;background:#7c7c7c"></div>
<div class="a t" style="left:54px;top:355px;font-size:15px;font-weight:bold;color:#000;letter-spacing:0.6px">179</div>
<div class="a t" style="left:133px;top:355px;font-size:15px;font-weight:bold;color:#000;letter-spacing:0.65px">2026-03-10 22:5...</div>
<div class="a t" style="left:283px;top:355px;font-size:15px;font-weight:bold;color:#000">游侠测试</div>
<div class="a t" style="left:433px;top:355px;font-size:15px;font-weight:bold;color:#000">WINDOW_CH...</div>
<div class="a t" style="left:553px;top:355px;font-size:15px;font-weight:bold;color:#000">游侠测试</div>
<div class="a" style="left:50px;top:375px;width:815px;height:24px;background:#fff"></div>
<div class="a" style="left:0;top:375px;width:49px;height:24px;background:#fff"></div>
<div class="a" style="left:0;top:399px;width:865px;height:1px;background:#7c7c7c"></div>
<div class="a" style="left:49px;top:375px;width:1px;height:25px;background:#7c7c7c"></div>
<div class="a" style="left:129px;top:375px;width:1px;height:25px;background:#7c7c7c"></div>
<div class="a" style="left:279px;top:375px;width:1px;height:25px;background:#7c7c7c"></div>
<div class="a" style="left:429px;top:375px;width:1px;height:25px;background:#7c7c7c"></div>
<div class="a" style="left:549px;top:375px;width:1px;height:25px;background:#7c7c7c"></div>
<div class="a" style="left:849px;top:375px;width:1px;height:25px;background:#7c7c7c"></div>
<div class="a t" style="left:54px;top:380px;font-size:15px;font-weight:bold;color:#000;letter-spacing:0.6px">178</div>
<div class="a t" style="left:133px;top:380px;font-size:15px;font-weight:bold;color:#000;letter-spacing:0.65px">2026-03-10 22:5...</div>
<div class="a t" style="left:283px;top:380px;font-size:15px;font-weight:bold;color:#000">游侠测试</div>
<div class="a t" style="left:433px;top:380px;font-size:15px;font-weight:bold;color:#000">WINDOW_CH...</div>
<div class="a" style="left:50px;top:400px;width:815px;height:24px;background:#d3d3d3"></div>
<div class="a" style="left:0;top:400px;width:49px;height:24px;background:#fff"></div>
<div class="a" style="left:0;top:424px;width:865px;height:1px;background:#7c7c7c"></div>
<div class="a" style="left:49px;top:400px;width:1px;height:25px;background:#7c7c7c"></div>
<div class="a" style="left:129px;top:400px;width:1px;height:25px;background:#7c7c7c"></div>
<div class="a" style="left:279px;top:400px;width:1px;height:25px;background:#7c7c7c"></div>
<div class="a" style="left:429px;top:400px;width:1px;height:25px;background:#7c7c7c"></div>
<div class="a" style="left:549px;top:400px;width:1px;height:25px;background:#7c7c7c"></div>
<div class="a" style="left:849px;top:400px;width:1px;height:25px;background:#7c7c7c"></div>
<div class="a t" style="left:54px;top:405px;font-size:15px;font-weight:bold;color:#000;letter-spacing:0.6px">177</div>
<div class="a t" style="left:133px;top:405px;font-size:15px;font-weight:bold;color:#000;letter-spacing:0.65px">2026-03-10 22:5...</div>
<div class="a t" style="left:283px;top:405px;font-size:15px;font-weight:bold;color:#000">Home</div>
<div class="a t" style="left:433px;top:405px;font-size:15px;font-weight:bold;color:#000">FOCUSED</div>
<div class="a" style="left:0;top:24px;width:865px;height:1px;background:#7c7c7c"></div>
<svg class="a" style="left:6px;top:33px" width="9" height="11"><path d="M1 0.5 L8 5.5 L1 10.5 Z" fill="#404040"/></svg>
<div class="a" style="left:865px;top:0;width:17px;height:413px;background:#f0f0f0"></div>
<div class="a" style="left:866px;top:17px;width:15px;height:30px;background:#cdcdcd"></div>
<svg class="a" style="left:868px;top:5px" width="10" height="7"><path d="M1 6 L5 2 L9 6" stroke="#606060" stroke-width="2" fill="none"/></svg>
<svg class="a" style="left:868px;top:402px" width="10" height="7"><path d="M1 1 L5 5 L9 1" stroke="#606060" stroke-width="2" fill="none"/></svg>
<div class="a" style="left:0;top:413px;width:865px;height:17px;background:#f0f0f0"></div>
<div class="a" style="left:17px;top:414px;width:768px;height:15px;background:#cdcdcd"></div>
<svg class="a" style="left:4px;top:417px" width="7" height="10"><path d="M6 1 L2 5 L6 9" stroke="#606060" stroke-width="2" fill="none"/></svg>
<svg class="a" style="left:854px;top:417px" width="7" height="10"><path d="M1 1 L5 5 L1 9" stroke="#606060" stroke-width="2" fill="none"/></svg>
</div>
<div class="a" style="left:910px;top:261px;width:155px;height:1px;background:#dcdcdc"></div>
<div class="a" style="left:916px;top:254px;width:34px;height:14px;background:#f0f0f0"></div>
<div class="a t" style="left:918px;top:254px;font-size:15px;font-weight:bold">统计</div>
<div class="a t" style="left:928px;top:275px;font-size:15px;font-weight:bold">已选中: 1</div>
<div class="a t" style="left:928px;top:296px;font-size:15px;font-weight:bold">当前页: 192</div>
<div class="a" style="left:910px;top:352px;width:155px;height:1px;background:#dcdcdc"></div>
<div class="a" style="left:910px;top:362px;width:155px;height:1px;background:#dcdcdc"></div>
<div class="a" style="left:916px;top:355px;width:34px;height:14px;background:#f0f0f0"></div>
<div class="a t" style="left:918px;top:356px;font-size:15px;font-weight:bold">操作</div>
<div class="a btn" style="left:926px;top:431px;width:123px;height:28px">删除选中</div>
<div class="a btn" style="left:926px;top:470px;width:123px;height:28px">清理旧数据</div>
<div class="a btn" style="left:926px;top:508px;width:123px;height:28px">导出</div>
<div class="a btn" style="left:926px;top:546px;width:123px;height:28px">查看详情</div>
<div class="a" style="left:910px;top:684px;width:155px;height:1px;background:#dcdcdc"></div>
<div class="a" style="left:1060px;top:693px;width:2px;height:2px;background:#a8a8a8"></div>
<div class="a" style="left:1060px;top:697px;width:2px;height:2px;background:#a8a8a8"></div>
<div class="a" style="left:1056px;top:697px;width:2px;height:2px;background:#a8a8a8"></div>
<div class="a" style="left:1060px;top:701px;width:2px;height:2px;background:#a8a8a8"></div>
<div class="a" style="left:1056px;top:701px;width:2px;height:2px;background:#a8a8a8"></div>
<div class="a" style="left:1052px;top:701px;width:2px;height:2px;background:#a8a8a8"></div>
<div class="a t" style="left:31px;top:690px;font-size:12px;color:#000">已加载 192 条日志记录 (第 1 页)</div>
<div class="a btn" style="left:37px;top:710px;width:58px;height:26px">首页</div>
<div class="a btn" style="left:107px;top:710px;width:68px;height:26px">上一页</div>
<div class="a btn" style="left:187px;top:710px;width:68px;height:26px">下一页</div>
<div class="a btn" style="left:267px;top:710px;width:58px;height:26px">末页</div>
<div class="a t" style="left:348px;top:716px;font-size:15px;font-weight:bold;letter-spacing:0.85px">第 1 页, 共 1 页 (总计 192</div>
<div class="a t" style="left:581px;top:716px;font-size:15px;font-weight:bold">跳转</div>
<div class="a" style="left:621px;top:712px;width:50px;height:23px;background:#fff;border:1px solid #7a7a7a"></div>
<div class="a btn" style="left:677px;top:710px;width:48px;height:26px">确定</div>
<svg class="a" style="left:0;top:0" width="2239" height="977">
<g opacity="0.78">
<circle cx="1631.5" cy="920.5" r="68.5" fill="none" stroke="#000" stroke-width="5"/>
<path d="M1581,946 C1582,935 1590,930 1598,928 C1597,890 1605,864 1630,862 C1655,864 1663,890 1663,928 C1672,930 1680,935 1682,946 Z" fill="#000"/>
<rect x="1582" y="944" width="99" height="33" fill="#000"/>
</g>
<path d="M1630,877 C1612,880 1603,902 1606,918 C1609,934 1622,940 1628,944 M1630,877 C1648,880 1658,902 1655,918 C1652,934 1638,940 1633,944" fill="none" stroke="#c4c4c4" stroke-width="2.6"/>
<path d="M1613,899 Q1615,909 1628,906 Q1620,903 1613,899 Z" fill="#c4c4c4" stroke="#c4c4c4" stroke-width="1.5"/>
<path d="M1647,899 Q1645,909 1632,906 Q1640,903 1647,899 Z" fill="#c4c4c4" stroke="#c4c4c4" stroke-width="1.5"/>
<rect x="1584.0" y="946.0" width="5.6" height="5.4" fill="#f4f4f4"/><rect x="1591.4" y="946.0" width="5.6" height="5.4" fill="#f4f4f4"/><rect x="1598.8" y="946.0" width="5.6" height="5.4" fill="#f4f4f4"/><rect x="1606.2" y="946.0" width="5.6" height="5.4" fill="#f4f4f4"/><rect x="1613.6" y="946.0" width="5.6" height="5.4" fill="#f4f4f4"/><rect x="1621.0" y="946.0" width="5.6" height="5.4" fill="#f4f4f4"/><rect x="1628.4" y="946.0" width="5.6" height="5.4" fill="#f4f4f4"/><rect x="1635.8" y="946.0" width="5.6" height="5.4" fill="#f4f4f4"/><rect x="1643.2" y="946.0" width="5.6" height="5.4" fill="#f4f4f4"/><rect x="1650.6" y="946.0" width="5.6" height="5.4" fill="#f4f4f4"/><rect x="1658.0" y="946.0" width="5.6" height="5.4" fill="#f4f4f4"/><rect x="1665.4" y="946.0" width="5.6" height="5.4" fill="#f4f4f4"/><rect x="1672.8" y="946.0" width="5.6" height="5.4" fill="#f4f4f4"/><rect x="1584.0" y="953.6" width="5.6" height="5.4" fill="#f4f4f4"/><rect x="1591.4" y="953.6" width="5.6" height="5.4" fill="#f4f4f4"/><rect x="1598.8" y="953.6" width="5.6" height="5.4" fill="#f4f4f4"/><rect x="1606.2" y="953.6" width="5.6" height="5.4" fill="#f4f4f4"/><rect x="1613.6" y="953.6" width="5.6" height="5.4" fill="#f4f4f4"/><rect x="1621.0" y="953.6" width="5.6" height="5.4" fill="#f4f4f4"/><rect x="1628.4" y="953.6" width="5.6" height="5.4" fill="#f4f4f4"/><rect x="1635.8" y="953.6" width="5.6" height="5.4" fill="#f4f4f4"/><rect x="1643.2" y="953.6" width="5.6" height="5.4" fill="#f4f4f4"/><rect x="1650.6" y="953.6" width="5.6" height="5.4" fill="#f4f4f4"/><rect x="1658.0" y="953.6" width="5.6" height="5.4" fill="#f4f4f4"/><rect x="1665.4" y="953.6" width="5.6" height="5.4" fill="#f4f4f4"/><rect x="1672.8" y="953.6" width="5.6" height="5.4" fill="#f4f4f4"/><rect x="1584.0" y="961.2" width="5.6" height="5.4" fill="#f4f4f4"/><rect x="1591.4" y="961.2" width="5.6" height="5.4" fill="#f4f4f4"/><rect x="1598.8" y="961.2" width="5.6" height="5.4" fill="#f4f4f4"/><rect x="1606.2" y="961.2" width="5.6" height="5.4" fill="#f4f4f4"/><rect x="1613.6" y="961.2" width="5.6" height="5.4" fill="#f4f4f4"/><rect x="1621.0" y="961.2" width="5.6" height="5.4" fill="#f4f4f4"/><rect x="1628.4" y="961.2" width="5.6" height="5.4" fill="#f4f4f4"/><rect x="1635.8" y="961.2" width="5.6" height="5.4" fill="#f4f4f4"/><rect x="1643.2" y="961.2" width="5.6" height="5.4" fill="#f4f4f4"/><rect x="1650.6" y="961.2" width="5.6" height="5.4" fill="#f4f4f4"/><rect x="1658.0" y="961.2" width="5.6" height="5.4" fill="#f4f4f4"/><rect x="1665.4" y="961.2" width="5.6" height="5.4" fill="#f4f4f4"/><rect x="1672.8" y="961.2" width="5.6" height="5.4" fill="#f4f4f4"/><rect x="1584.0" y="968.8" width="5.6" height="5.4" fill="#f4f4f4"/><rect x="1591.4" y="968.8" width="5.6" height="5.4" fill="#f4f4f4"/><rect x="1598.8" y="968.8" width="5.6" height="5.4" fill="#f4f4f4"/><rect x="1606.2" y="968.8" width="5.6" height="5.4" fill="#f4f4f4"/><rect x="1613.6" y="968.8" width="5.6" height="5.4" fill="#f4f4f4"/><rect x="1621.0" y="968.8" width="5.6" height="5.4" fill="#f4f4f4"/><rect x="1628.4" y="968.8" width="5.6" height="5.4" fill="#f4f4f4"/><rect x="1635.8" y="968.8" width="5.6" height="5.4" fill="#f4f4f4"/><rect x="1643.2" y="968.8" width="5.6" height="5.4" fill="#f4f4f4"/><rect x="1650.6" y="968.8" width="5.6" height="5.4" fill="#f4f4f4"/><rect x="1658.0" y="968.8" width="5.6" height="5.4" fill="#f4f4f4"/><rect x="1665.4" y="968.8" width="5.6" height="5.4" fill="#f4f4f4"/><rect x="1672.8" y="968.8" width="5.6" height="5.4" fill="#f4f4f4"/>
<path d="M1619,946 L1640,944 L1648,950 L1652,976 L1630,976 L1622,966 Q1616,958 1619,946 Z" fill="#fff" stroke="#222" stroke-width="1.2"/>
<g fill="none" stroke="#000" stroke-opacity="0.8" stroke-width="6.5" stroke-linecap="butt">
<path d="M1710,874 H1726"/>
<path d="M1716,887 Q1732,920 1716,956"/>
<path d="M1738,876 V960"/>
<path d="M1746,868 V883"/>
<path d="M1733,880 H1762"/>
<path d="M1738,894 H1757 V922"/>
<path d="M1771,868 V883"/>
<path d="M1767,880 H1807"/>
<path d="M1768,894 H1805 L1784,913"/>
<path d="M1758,917 H1807"/>
<path d="M1784,912 C1760,920 1752,935 1756,945 C1760,958 1790,960 1794,940 L1792,917"/>
<path d="M1835,869 Q1830,893 1817,901"/>
<path d="M1829,894 V960"/>
<path d="M1842,880 H1908"/>
<path d="M1875,868 V917"/>
<path d="M1842,917 H1908"/>
<path d="M1875,917 Q1865,948 1842,958"/>
<path d="M1877,924 Q1890,950 1908,956"/>
<path d="M1922,875.5 H1999"/>
<path d="M1918,904 H2002"/>
<path d="M1930,908 L1924,940 Q1922,955 1938,955 L1980,955 Q2000,955 2000,937 Q2000,921 1984,921 Q1967,921 1967,936 L1967,947"/>
<path d="M2012,875.5 H2049"/>
<path d="M2028,876 Q2026,900 2013,910"/>
<path d="M2033,899 Q2048,899 2048,915 V941 Q2048,957 2033,957 Q2019,957 2019,941 V915 Q2019,899 2033,899 Z"/>
<path d="M2057,875.5 H2080 Q2090,875.5 2090,886 V910"/>
<path d="M2064,883 V910 H2099 V942 Q2099,955 2086,955 H2059"/>
<path d="M2053,934 H2092"/>
<path d="M2117,958 V884 Q2117,872 2129,872 H2201 V945 Q2201,952 2193,958"/>
</g>
<g fill="#c0182a" opacity="0.92">
<path d="M1848,889.5 C1841,896 1843,903 1851,905.5 L1865.5,909.5 C1857,903 1851,897 1848,889.5 Z"/>
<path d="M1902,889.5 C1909,896 1907,903 1899,905.5 L1884.5,909.5 C1893,903 1899,897 1902,889.5 Z"/>
</g>
<g fill="#c0182a" opacity="0.9">
<polygon points="2126,888 2135,888 2145,914 2136,940 2127,940 2136,914"/>
<polygon points="2150.5,888 2159,888 2189,940 2180.5,940"/>
<polygon points="2180.5,888 2189,888 2159,940 2150.5,940"/>
</g>
</svg>
</body></html>
